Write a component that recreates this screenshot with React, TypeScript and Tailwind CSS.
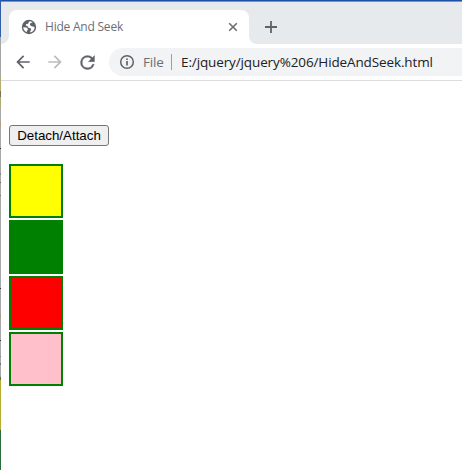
import React from "react";

const edge: { color: string; height: number }[] = [
  { color: "#2f5da8", height: 37 },
  { color: "#a5a5a5", height: 40 },
  { color: "#b5ab72", height: 14 },
  { color: "#77735c", height: 6 },
  { color: "#b5ab72", height: 10 },
  { color: "#a8a8a8", height: 16 },
  { color: "#c59a58", height: 3 },
  { color: "#a8a8a8", height: 22 },
  { color: "#333333", height: 1 },
  { color: "#a8a8a8", height: 24 },
  { color: "#858585", height: 2 },
  { color: "#a8a8a8", height: 7 },
  { color: "#666666", height: 1 },
  { color: "#a8a8a8", height: 12 },
  { color: "#777777", height: 1 },
  { color: "#a8a8a8", height: 92 },
  { color: "#333333", height: 1 },
  { color: "#a8a8a8", height: 26 },
  { color: "#b09a70", height: 3 },
  { color: "#a8a8a8", height: 22 },
  { color: "#333333", height: 1 },
  { color: "#a8a8a8", height: 15 },
  { color: "#858585", height: 1 },
  { color: "#a8a8a8", height: 6 },
  { color: "#6f6f6f", height: 2 },
  { color: "#a8a8a8", height: 12 },
  { color: "#4d7650", height: 3 },
  { color: "#b8ac30", height: 50 },
  { color: "#2c6b3b", height: 40 },
];

const boxes = ["bg-[#ffff00]", "bg-[#008000]", "bg-[#ff0000]", "bg-[#ffc0cb]"];

function TabStrip() {
  return (
    <div className="flex h-[42px] bg-[#e7eaed] pt-2">
      <div className="flex w-2 items-end bg-white">
        <div className="h-full w-2 rounded-br-lg bg-[#e7eaed]" />
      </div>
      <div className="flex w-[240px] items-center rounded-t-lg bg-white pl-3 pr-[11px]">
        <svg className="h-4 w-4 shrink-0" viewBox="0 0 16 16">
          <circle cx="8" cy="8" r="7.2" fill="#5f6368" />
          <path
            d="M8.6 2.2L10.9 2.8L11.6 3.6L9.6 4.1L8.8 5.6L10 6.9L11.6 7.4L13.6 7.9C13.8 10.4 12 12.9 9.4 13.6L9.2 11.9L10.3 11L9.6 9.3L7.4 8.7L6.4 7L4.8 6.5L5.1 5.1L7.3 4.8L7.6 3.2Z"
            fill="white"
          />
          <path d="M2.2 8.2L5.6 8.4L7 10L6.6 11.2L5.8 11.4L5.9 13.2C3.8 12.3 2.3 10.5 2.2 8.2Z" fill="white" />
        </svg>
        <span className="ml-2 w-[79px] whitespace-nowrap text-[12px] leading-4 tracking-[-0.22px] text-[#6b6f74]">Hide And Seek</span>
        <svg className="ml-auto h-[10px] w-[10px]" viewBox="0 0 10 10" stroke="#6b6e73" strokeWidth="1.6">
          <path d="M1.2 1.2L8.8 8.8M8.8 1.2L1.2 8.8" />
        </svg>
      </div>
      <div className="flex grow bg-white">
        <div className="grow rounded-bl-lg bg-[#e7eaed] pl-4 pt-[11px]">
          <svg className="h-3 w-3" viewBox="0 0 12 12" stroke="#5f6368" strokeWidth="1.8">
            <path d="M6 0v12M0 6h12" />
          </svg>
        </div>
      </div>
    </div>
  );
}

function Toolbar() {
  return (
    <div className="flex h-[37px] items-center border-b border-[#dadce0] pl-3">
      <svg className="h-5 w-5" viewBox="0 0 24 24" fill="#5f6368">
        <path d="M20 11H7.83l5.59-5.59L12 4l-8 8 8 8 1.41-1.41L7.83 13H20v-2z" />
      </svg>
      <svg className="ml-3 h-5 w-5" viewBox="0 0 24 24" fill="#babcbe">
        <path d="M12 4l-1.41 1.41L16.17 11H4v2h12.17l-5.58 5.59L12 20l8-8z" />
      </svg>
      <svg className="ml-3 h-[21px] w-[21px]" viewBox="0 0 24 24" fill="#5f6368" stroke="#5f6368" strokeWidth="0.4">
        <path d="M17.65 6.35A7.96 7.96 0 0 0 12 4a8 8 0 1 0 7.73 10h-2.08A6 6 0 1 1 12 6c1.66 0 3.14.69 4.22 1.78L13 11h7V4l-2.35 2.35z" />
      </svg>
      <div className="ml-[11px] flex h-7 grow items-center rounded-l-full bg-[#f1f3f4] pl-[10px]">
        <svg className="h-4 w-4" viewBox="0 0 16 16" fill="none" stroke="#5f6368">
          <circle cx="8" cy="8" r="6.3" strokeWidth="1.5" />
          <path d="M8 7v4.5M8 4.4v1.7" strokeWidth="1.7" />
        </svg>
        <span className="ml-2 w-[22px] whitespace-nowrap text-[13.5px] tracking-[-0.2px] text-[#6b6f74]">File</span>
        <span className="ml-[6px] h-4 w-px bg-[#9b9ea2]" />
        <span className="ml-[9px] whitespace-nowrap text-[13.5px] tracking-[-0.12px] text-[#202124]">E:/jquery/jquery%206/HideAndSeek.html</span>
      </div>
    </div>
  );
}

export default function App() {
  return (
    <div className="flex h-[470px] w-[462px] overflow-hidden bg-white font-['Open_Sans','Noto_Sans',sans-serif]">
      <div className="w-px shrink-0">
        {edge.map((part, i) => (
          <div key={i} style={{ height: part.height, backgroundColor: part.color }} />
        ))}
      </div>
      <div className="min-w-0 grow">
        <div className="h-[2px] border-b border-[#8393aa] bg-[#1d50a9]" />
        <TabStrip />
        <Toolbar />
        <main className="flex flex-col items-start pl-2 pt-11">
          <button className="mb-[18px] h-[21px] w-[100px] whitespace-nowrap rounded-[3px] border border-[#767676] bg-[#efefef] text-center font-['Liberation_Sans',Arial,sans-serif] text-[13.333px] leading-[19px] text-black">
            Detach/Attach
          </button>
          <div className="flex flex-col gap-[2px]">
            {boxes.map((color) => (
              <div key={color} className={"h-[54px] w-[54px] border-2 border-[#008000] " + color} />
            ))}
          </div>
        </main>
      </div>
    </div>
  );
}
